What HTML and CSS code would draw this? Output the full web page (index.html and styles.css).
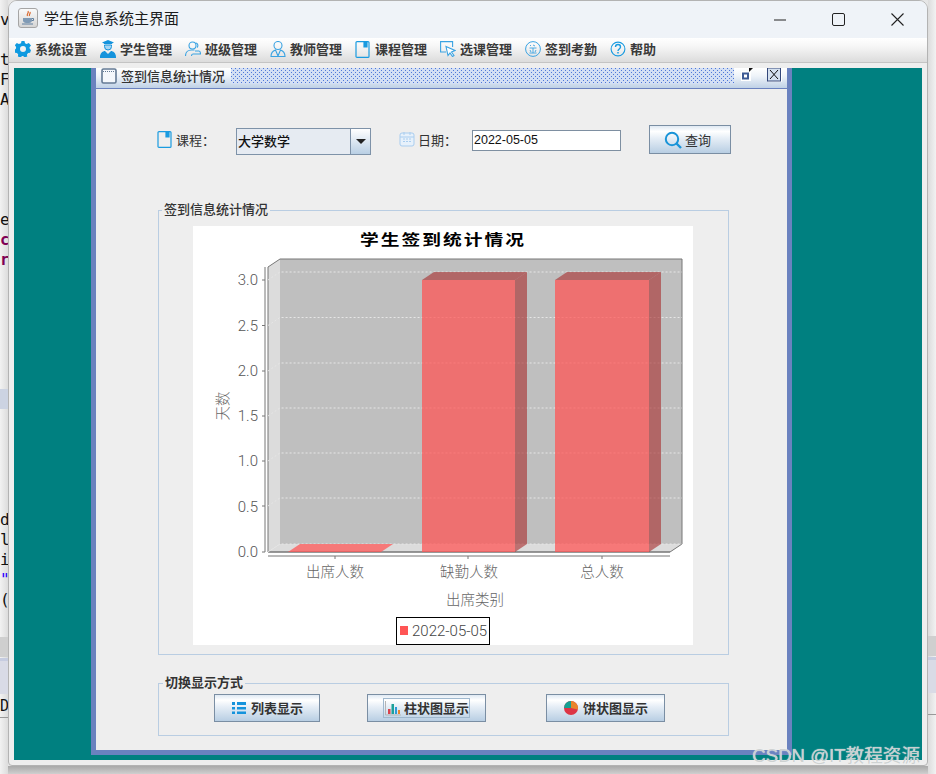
FILE: index.html
```html
<!DOCTYPE html>
<html lang="zh">
<head>
<meta charset="utf-8">
<title>学生信息系统主界面</title>
<link rel="stylesheet" href="styles.css">
</head>
<body>
<div class="page">
  <div class="side side-left">
    <div class="code-top"><span>v</span><span></span><span>t</span><span>F</span><span>A</span></div>
    <div class="code-mid"><span>e</span><span class="kw">c</span><span class="kw">r</span></div>
    <div class="band"></div>
    <div class="code-low"><span>d</span><span>l</span><span>i</span><span class="str">"</span><span>(</span></div>
    <div class="band2"></div>
    <div class="band3"></div>
    <div class="code-end"><span>D</span></div>
  </div>
  <div class="center">
    <div class="window">
      <div class="titlebar">
        <div class="app-icon">
          <svg width="20" height="20" viewBox="0 0 20 20"><path d="M10 3c1.500 2-2 3-.5 5M12 4c1 1.500-1.500 2.500-.5 4" fill="none" stroke="#d9662a" stroke-width="1.200"/><path d="M5 10h9v2.500c0 1.500-1.500 2.500-3 2.500H8c-1.500 0-3-1-3-2.500z" fill="#7f9ab5"/><path d="M14 10.500h1.500v2H14M4 16h11" fill="none" stroke="#5f7f9f"/></svg>
        </div>
        <div class="app-title">学生信息系统主界面</div>
        <div class="win-controls">
          <svg class="wc wc-min" width="12" height="12" viewBox="0 0 12 12"><path d="M0 6h12" stroke="#222" stroke-width="1"/></svg>
          <svg class="wc wc-max" width="13" height="13" viewBox="0 0 13 13"><rect x=".5" y=".5" width="12" height="12" rx="1.500" fill="none" stroke="#222"/></svg>
          <svg class="wc" width="13" height="13" viewBox="0 0 13 13"><path d="M.5.500l12 12M12.500.500l-12 12" stroke="#222" stroke-width="1.100"/></svg>
        </div>
      </div>
      <div class="menubar">
        <div class="menu-item"><svg class="ic" width="16" height="16" viewBox="0 0 16 16"><path fill="#0f9ae0" fill-rule="evenodd" d="M6.500 0h3l.5 2.200 1.700.8L13.800 2 16 4.500l-1.500 1.700.3 1.800 1.200 1-.9 2.800-2 .2-1.200 1.500.4 2-2.800 1-1.300-1.500H7l-1.400 1.500-2.700-1 .3-2L2 12l-2-.3L-.5 9l1.400-1.200.2-1.800L-.2 4.300 1.800 2l2.100.9L6 2.200zM8 5a3 3 0 100 6 3 3 0 000-6z"/></svg><span>系统设置</span></div>
        <div class="menu-item"><svg class="ic" width="16" height="18" viewBox="0 0 16 18"><path fill="#1593dc" d="M8 0l6 2.500-2 1V4H4v-.5l-2-1z"/><path fill="#a8d6f3" stroke="#1593dc" d="M4.500 5h7v1.500a3.500 3.500 0 01-7 0z"/><path fill="#1593dc" d="M0 17c0-4 3-6 5-6l3 3 3-3c2 0 5 2 5 6v1H0z"/></svg><span>学生管理</span></div>
        <div class="menu-item"><svg class="ic" width="16" height="16" viewBox="0 0 16 16" fill="none" stroke="#3ba3e2" stroke-width="1.100"><circle cx="7.500" cy="4.500" r="3.500"/><path d="M.5 15c0-4 3-6 6-6h3"/><path d="M11 2c2 .5 2.500 3 1 4.500M10 10h4c1 0 1.500 1 1.500 3H8c-1 0-1.500 1-1.500 2"/></svg><span>班级管理</span></div>
        <div class="menu-item"><svg class="ic" width="16" height="16" viewBox="0 0 16 16" fill="none" stroke="#3ba3e2" stroke-width="1.100"><circle cx="8" cy="4.500" r="4"/><path d="M5.500 9C2.500 10 1 12 1 15.500h14c0-3.500-1.500-5.500-4.500-6.500L8 15z"/></svg><span>教师管理</span></div>
        <div class="menu-item"><svg class="ic" width="16" height="17" viewBox="0 0 16 17" fill="none" stroke="#1a9be0" stroke-width="1.200"><rect x="1" y=".6" width="13" height="15.800" rx="1"/><path d="M9 1v5h3V1" fill="#1a9be0"/></svg><span>课程管理</span></div>
        <div class="menu-item"><svg class="ic" width="16" height="16" viewBox="0 0 16 16" fill="none" stroke="#3ba3e2" stroke-width="1.100"><path d="M6 11H.6V.6h12V6"/><path d="M6 5.500l9 4-3.500 1.500 2.500 3.500-1.500 1-2.500-3.500L8 14.500z" fill="#fff"/></svg><span>选课管理</span></div>
        <div class="menu-item"><svg class="ic" width="16" height="16" viewBox="0 0 16 16" fill="none" stroke="#3ba3e2" stroke-width="1"><circle cx="8" cy="8" r="7.400"/><path d="M5 5l1-1M8 4l2 1M4.500 7h7M8 7v5M5 9l1 2M11 9l-1 2M4.500 12h7" stroke-width=".9"/></svg><span>签到考勤</span></div>
        <div class="menu-item"><svg class="ic" width="16" height="16" viewBox="0 0 16 16" fill="none" stroke="#1a9be0" stroke-width="1.100"><circle cx="8" cy="8" r="6.900"/><path d="M5.500 6c0-3.300 5-3.300 5 0 0 2-2.500 2-2.500 4" stroke-width="1.400"/><path d="M8 11v1.500" stroke-width="1.500"/></svg><span>帮助</span></div>
      </div>
      <div class="desktop-wrap">
        <div class="desktop">
          <div class="frame">
            <div class="frame-title">
              <svg class="frame-icon" width="16" height="16" viewBox="0 0 16 16"><rect x="1" y="1" width="14" height="14" rx="1.500" fill="#f5f8fc" stroke="#647a94" stroke-width="1.600"/><path d="M2 3.500h12" stroke="#647a94" stroke-width="1" stroke-dasharray="1 1"/></svg>
              <span class="frame-text">签到信息统计情况</span>
              <div class="dots"></div>
              <div class="frame-btns">
                <svg class="fb-icon" width="14" height="14" viewBox="0 0 14 14"><rect x="0" y="3" width="10" height="10" fill="#fff"/><rect x="2" y="5.500" width="5" height="5" fill="#fff" stroke="#3d5a94" stroke-width="2"/><path d="M8 0h4l-4 4z" fill="#111"/></svg>
                <svg class="fb-close" width="15" height="14" viewBox="0 0 15 14"><path d="M1 13.500h13.500V0" fill="none" stroke="#fff"/><rect x=".5" y="0" width="13" height="13" fill="#d5e1ef" stroke="#33477a"/><path d="M3 2l8 9M11 2l-8 9" stroke="#111"/></svg>
              </div>
            </div>
            <div class="frame-body">
              <div class="query">
                <svg class="q-book" width="16" height="17" viewBox="0 0 16 17" fill="none" stroke="#1a9be0" stroke-width="1.200"><rect x="1" y=".6" width="13" height="15.800" rx="1"/><path d="M9 1v5h3V1" fill="#1a9be0"/></svg>
                <label class="q-label q-course">课程：</label>
                <div class="combo"><span class="combo-text">大学数学</span><span class="combo-btn"><i class="arrow"></i></span></div>
                <svg class="q-cal" width="16" height="16" viewBox="0 0 16 16"><rect x="1" y="2" width="14" height="13" rx="2" fill="#e7f1fb" stroke="#a9cdef"/><path d="M1 6h14M5 1v3M11 1v3" stroke="#a9cdef"/><path d="M4 8h2M7 8h2M10 8h2M4 10.500h2M7 10.500h2M10 10.500h2" stroke="#a9cdef"/></svg>
                <label class="q-label q-date">日期：</label>
                <div class="date-input">2022-05-05</div>
                <div class="btn btn-query"><svg width="18" height="18" viewBox="0 0 18 18" fill="none" stroke="#1a94d8"><circle cx="8" cy="8" r="6.200" stroke-width="2"/><path d="M12.500 12.500l4.500 4.500" stroke-width="2.400"/></svg><span>查询</span></div>
              </div>
              <fieldset class="group group-chart">
                <legend>签到信息统计情况</legend>
                <svg class="chart" width="500" height="419" viewBox="0 0 500 419">
                  <rect width="500" height="419" fill="#fff"/>
                  <text class="c-title" transform="translate(250 19) scale(1.250 1)" text-anchor="middle">学生签到统计情况</text>
                  <path d="M87 33H489V318H87z" fill="#bfbfbf"/>
                  <path d="M75 41L87 33V318L75 326z" fill="#dcdcdc"/>
                  <path d="M75 326L87 318H489L477 326z" fill="#dcdcdc"/>
                  <path d="M75 326V41L87 33H489V318L477 326z" fill="none" stroke="#777"/>
                  <path d="M75 326H477" stroke="#777"/>
                  <g class="grid">
                    <path d="M75 54L87 46H489M75 99.500L87 91.500H489M75 145L87 137H489M75 190L87 182H489M75 235L87 227H489M75 280L87 272H489M75 326L87 318H489"/>
                  </g>
                  <g class="bar-front">
                    <path d="M95 326H188L200 318H107z"/>
                    <path d="M229 54H322V326H229z"/>
                    <path d="M362 54H456V326H362z"/>
                  </g>
                  <g class="bar-side">
                    <path d="M229 54L241 46H334L322 54z"/>
                    <path d="M322 54L334 46V318L322 326z"/>
                    <path d="M362 54L374 46H468L456 54z"/>
                    <path d="M456 54L468 46V318L456 326z"/>
                  </g>
                  <path d="M72 41V326M69 54H72M69 99.500H72M69 145H72M69 190H72M69 235H72M69 280H72M69 326H72" stroke="#777" fill="none"/>
                  <path d="M75 330H477M142 330V333M275 330V333M409 330V333" stroke="#777" fill="none"/>
                  <g class="c-tick">
                    <text x="65" y="59" text-anchor="end">3.0</text>
                    <text x="65" y="105" text-anchor="end">2.5</text>
                    <text x="65" y="150" text-anchor="end">2.0</text>
                    <text x="65" y="195" text-anchor="end">1.5</text>
                    <text x="65" y="240" text-anchor="end">1.0</text>
                    <text x="65" y="286" text-anchor="end">0.5</text>
                    <text x="65" y="331" text-anchor="end">0.0</text>
                  </g>
                  <g class="c-cat">
                    <text x="142" y="351" text-anchor="middle">出席人数</text>
                    <text x="276" y="351" text-anchor="middle">缺勤人数</text>
                    <text x="409" y="351" text-anchor="middle">总人数</text>
                    <text x="282" y="379" text-anchor="middle">出席类别</text>
                    <text x="0" y="0" text-anchor="middle" transform="translate(35 180) rotate(-90)">天数</text>
                  </g>
                  <rect x="203.500" y="391.500" width="93" height="27" fill="#fff" stroke="#000"/>
                  <rect x="207" y="400" width="8" height="9" fill="#ff5555"/>
                  <text class="c-legend" x="219" y="410">2022-05-05</text>
                </svg>
              </fieldset>
              <fieldset class="group group-switch">
                <legend>切换显示方式</legend>
                <div class="switch-row">
                  <div class="btn btn-list"><svg width="14" height="14" viewBox="0 0 14 14" fill="#1593dc"><path d="M0 1h3v3H0zM5 1h9v3H5zM0 6h3v2.500H0zM5 6h9v2.500H5zM0 10.500h3V13H0zM5 10.500h9V13H5z"/></svg><span>列表显示</span></div>
                  <div class="btn btn-bar"><span class="focus"><svg width="16" height="16" viewBox="0 0 16 16"><path d="M.5 1v14H16" fill="none" stroke="#b5b5b5"/><path fill="#d9414b" d="M3 9h2.500v5H3z"/><path fill="#1ca19a" d="M6.500 4H9v10H6.500z"/><path fill="#2d9bd8" d="M10 7h2v7h-2z"/><path fill="#e8852b" d="M13 10h2v4h-2z"/></svg><span class="nowrap">柱状图显示</span></span></div>
                  <div class="btn btn-pie"><svg width="14" height="14" viewBox="0 0 14 14"><circle cx="7" cy="7" r="7" fill="#dd3546"/><path d="M7 7V0A7 7 0 000 7z" fill="#14a093"/><path d="M7 7V0a7 7 0 016.800 8.500z" fill="#e8852b"/></svg><span>饼状图显示</span></div>
                </div>
              </fieldset>
            </div>
          </div>
        </div>
      </div>
    </div>
    <div class="shadow"></div>
  </div>
  <div class="side side-right">
    <div class="r-band"></div>
    <div class="r-band2"></div>
    <div class="r-band3"></div>
  </div>
  <div class="watermark">CSDN @IT教程资源</div>
</div>
</body>
</html>
```
FILE: styles.css
```css
* { box-sizing: border-box; }
html, body { margin: 0; padding: 0; background: #e6e6e6; }
body { font-family: "Noto Sans CJK SC", "Liberation Sans", sans-serif; color: #222; }
.page { position: relative; display: flex; width: 936px; height: 774px; overflow: hidden; }

.side { width: 8px; flex: none; }
.side-left { background: linear-gradient(90deg, #f2f2f2, #dcdcdc); font: 16px/20px "DejaVu Sans Mono", "Liberation Mono", monospace; color: #111; display: flex; flex-direction: column; overflow: hidden; }
.side-left span { display: block; height: 20px; }
.code-top { padding-top: 10px; }
.code-mid { margin-top: 100px; }
.kw { color: #7f0055; font-weight: bold; }
.str { color: #2a00ff; }
.band { margin-top: 119px; height: 20px; background: #ccd3e2; }
.code-low { margin-top: 101px; }
.band2 { margin-top: 27px; height: 20px; background: #cfcfcf; }
.band3 { margin-top: 1px; height: 36px; background: #d9dbe6; border-top: 3px solid #c6cce0; }
.code-end { margin-top: 2px; font-size: 15px; border-bottom: 1px solid #999; height: 22px; }

.center { width: 920px; flex: none; display: flex; flex-direction: column; }
.window { height: 766px; background: #eeeeee; border: 1px solid #b3b3b3; border-radius: 9px 9px 4px 4px; display: flex; flex-direction: column; overflow: hidden; }
.shadow { flex: 1; background: linear-gradient(#a9a9a9, #cfcfcf); }

.titlebar { height: 37px; flex: none; background: #eff3f8; display: flex; align-items: center; padding: 0 0 4px 9px; }
.app-icon { width: 20px; height: 20px; border: 1px solid #a5a5a5; border-radius: 3px; background: linear-gradient(#fafafa, #d5d5d5); }
.app-icon svg { display: block; margin: -1px; }
.app-title { margin-left: 6px; font-size: 15px; line-height: 20px; color: #1c1c1c; }
.win-controls { margin: 4px 0 0 auto; display: flex; align-items: center; padding-right: 23px; }
.wc { display: block; }
.wc-min { margin-right: 46px; }
.wc-max { margin-right: 46px; }

.menubar { height: 25px; flex: none; display: flex; align-items: center; padding: 0 0 2px 6px; background: linear-gradient(#ffffff, #f6f6f6 35%, #dcdcdc); border-bottom: 1px solid #c4c4c4; }
.menu-item { width: 85px; flex: none; display: flex; align-items: center; gap: 4px; font-size: 13px; font-weight: 700; color: #3a3a3a; line-height: 18px; }
.ic { flex: none; }

.desktop-wrap { flex: 1; padding: 5px 5px 5px; }
.desktop { height: 692px; background: #008080; padding-left: 77px; }
.frame { width: 701px; height: 687px; background: #6a82bf; padding: 0 5px 5px; display: flex; flex-direction: column; }
.frame-title { height: 21px; flex: none; display: flex; align-items: flex-start; background: linear-gradient(#ffffff, #eef3f9 40%, #bfd1e6); border-bottom: 1px solid #6a82bf; }
.frame-icon { margin: 0 0 0 5px; flex: none; }
.frame-text { margin-left: 4px; font-size: 13px; line-height: 16px; font-weight: 500; color: #333; }
.dots { width: 503px; height: 16px; margin-left: 6px; flex: none; background:
  radial-gradient(circle at .5px .5px, #4f78d8 .6px, transparent .7px) 0 0 / 4px 4px,
  radial-gradient(circle at .5px .5px, #4f78d8 .6px, transparent .7px) 2px 2px / 4px 4px,
  #d3dff4; }
.frame-btns { display: flex; align-items: flex-start; margin-left: 7px; }
.fb-icon { display: block; }
.fb-close { display: block; margin-left: 12px; }

.frame-body { flex: 1; background: #eeeeee; padding: 36px 58px 0 62px; }
.query { display: flex; align-items: flex-start; height: 78px; margin-left: -1px; }
.q-book { margin-top: 6px; flex: none; }
.q-label { font-size: 13px; line-height: 18px; color: #333; margin-top: 6px; flex: none; }
.q-course { margin-left: 3px; width: 60px; }
.combo { width: 135px; height: 27px; margin-top: 3px; flex: none; border: 1px solid #7e92a8; background: #e6ebf2; display: flex; }
.combo-text { flex: 1; font-size: 13px; line-height: 23px; padding-left: 1px; color: #111; font-weight: 500; }
.combo-btn { width: 20px; border-left: 1px solid #7e92a8; background: linear-gradient(#fff, #b9cfe4); display: flex; align-items: center; justify-content: center; }
.arrow { width: 0; height: 0; border: 5px solid transparent; border-top: 5px solid #222; border-bottom: 0; }
.q-cal { margin: 6px 0 0 28px; flex: none; }
.q-date { margin-left: 3px; width: 54px; }
.date-input { width: 149px; height: 21px; margin-top: 5px; flex: none; background: #fff; border: 1px solid #7e8fa1; font: 12.500px/19px "Liberation Sans", sans-serif; padding-left: 1px; color: #111; }
.btn { display: flex; align-items: center; justify-content: center; gap: 3px; border: 1px solid #7a8ea3; background: linear-gradient(#dfe9f3, #ffffff 20%, #e6eef6 45%, #b8cee3); font-size: 13px; line-height: 18px; color: #333; font-weight: 700; }
.btn-query { width: 82px; height: 29px; margin-left: 28px; flex: none; font-weight: 400; justify-content: flex-start; padding-left: 14px; }

.group { margin: 0; padding: 0; min-width: 0; width: 571px; border: 1px solid #b9cde2; }
.group legend { margin-left: 3px; padding: 0 2px 3px; font-size: 13px; line-height: 12px; font-weight: 500; color: #333; }
.group-chart { height: 452px; padding-top: 8px; }
.chart { display: block; margin-left: 34px; }
.group-switch { height: 60px; margin-top: 21px; padding-top: 3px; }
.group-switch legend { font-weight: 700; margin-left: 4px; }
.switch-row { display: flex; align-items: flex-start; margin-left: 55px; }
.btn-list { width: 106px; height: 28px; gap: 5px; padding-left: 1px; }
.btn-bar { width: 119px; height: 28px; margin-left: 47px; }
.btn-pie { width: 119px; height: 28px; margin-left: 60px; gap: 5px; padding-left: 1px; }
.focus { display: flex; align-items: center; gap: 3px; border: 1px solid #9fb8ce; padding-left: 1px; height: 20px; width: 87px; }
.nowrap { white-space: nowrap; }

.grid path { fill: none; stroke: #e6e6e6; stroke-dasharray: 2 2; }
.bar-front { fill: #ff5555; fill-opacity: .74; }
.bar-side { fill: #a82e2e; fill-opacity: .62; }
.c-title { font: 700 15px "Noto Sans CJK SC", sans-serif; letter-spacing: 1.600px; fill: #000; }
.c-tick text { font: 300 15px Roboto, "Liberation Sans", sans-serif; fill: #555; }
.c-cat text { font: 300 14.500px "Noto Sans CJK SC", sans-serif; fill: #666; }
.c-legend { font: 300 15px Roboto, "Liberation Sans", sans-serif; fill: #444; }

.side-right { width: 8px; background: linear-gradient(90deg, #dcdcdc, #f2f2f2); display: flex; flex-direction: column; padding-top: 636px; }
.r-band { height: 20px; background: #cfcfcf; }
.r-band2 { height: 36px; background: #d9dbe6; border-top: 3px solid #c6cce0; margin-top: 1px; }
.r-band3 { height: 22px; border-bottom: 1px solid #999; }

.watermark { position: absolute; right: 16px; bottom: 7px; font: 18.600px/22px "Liberation Sans", "Noto Sans CJK SC", sans-serif; color: rgba(200, 204, 204, .9); text-shadow: 0 0 1px #fff; }
```
